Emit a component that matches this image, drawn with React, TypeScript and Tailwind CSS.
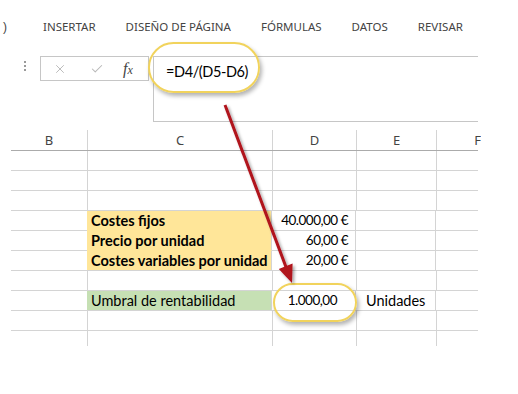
import { X, Check } from "lucide-react";

type Row = {
  c?: string;
  d?: string;
  e?: string;
  fill?: "yellow" | "green";
  bold?: boolean;
  hideBottom?: boolean;
};

const rows: Row[] = [
  {},
  {},
  {},
  { c: "Costes fijos", d: "40.000,00 €", fill: "yellow", bold: true, hideBottom: true },
  { c: "Precio por unidad", d: "60,00 €", fill: "yellow", bold: true, hideBottom: true },
  { c: "Costes variables por unidad", d: "20,00 €", fill: "yellow", bold: true },
  {},
  { c: "Umbral de rentabilidad", d: "1.000,00", e: "Unidades", fill: "green" },
  {},
];

const tabs = ["INSERTAR", "DISEÑO DE PÁGINA", "FÓRMULAS", "DATOS", "REVISAR"];

const cellFont = "font-['Lato',sans-serif] text-[14.5px] text-black";

const App = () => {
  return (
    <div className="relative w-[518px] h-[394px] bg-white overflow-hidden">
      {/* ribbon tabs */}
      <div className="flex items-center h-[52px] font-['Noto_Sans',sans-serif] text-[11.5px] text-[#444] pt-[2px]">
        <span className="ml-[3px] font-['Liberation_Sans',sans-serif] text-[12px]">)</span>
        <div className="flex gap-[30px] ml-[36px]">
          {tabs.map((t) => (
            <span key={t}>{t}</span>
          ))}
        </div>
      </div>

      {/* formula bar */}
      <div className="flex h-[69px] mt-[4px]">
        <div className="w-[40px] flex justify-center pt-[4px]">
          <div className="flex flex-col gap-[2px] pt-[1px] ml-[9px]">
            <span className="w-[2px] h-[2px] bg-[#9a9a9a]" />
            <span className="w-[2px] h-[2px] bg-[#9a9a9a]" />
            <span className="w-[2px] h-[2px] bg-[#9a9a9a]" />
          </div>
        </div>
        <div className="w-[109px] h-[25px] border border-[#c6c6c6] flex items-center">
          <X className="ml-[12px] text-[#b8b8b8]" size={14} strokeWidth={1.6} />
          <Check className="ml-[23px] text-[#b8b8b8]" size={14} strokeWidth={1.8} />
          <span className="ml-[19px] font-['Liberation_Serif',serif] italic text-[16px] text-[#444] leading-none">
            f<span className="text-[12px]">x</span>
          </span>
        </div>
        <div className="ml-[4px] w-[325px] h-[66px] border-t border-l border-b border-[#c6c6c6] pl-[12px] pt-[2px]">
          <span className={`${cellFont} tracking-[-0.4px]`}>=D4/(D5-D6)</span>
        </div>
      </div>

      {/* sheet grid */}
      <div className="ml-[11px] w-[467px] mt-[5px]">
        <div className="flex h-[21px] border-b border-[#ababab] font-['Noto_Sans',sans-serif] text-[13px] text-[#444]">
          <div className="w-[77px] border-r border-[#d4d4d4] text-center leading-[21px]">B</div>
          <div className="w-[185px] border-r border-[#d4d4d4] text-center leading-[21px]">C</div>
          <div className="w-[84px] border-r border-[#d4d4d4] text-center leading-[21px]">D</div>
          <div className="w-[80px] border-r border-[#d4d4d4] text-center leading-[21px]">E</div>
          <div className="flex-1 overflow-hidden text-right leading-[21px] -mr-[3px]">F</div>
        </div>
        {rows.map((r, i) => (
          <div key={i} className={`flex h-[20px] ${cellFont}`}>
            <div className="w-[77px] border-r border-b border-[#d4d4d4]" />
            <div
              className={`w-[185px] border-r border-b border-[#d4d4d4] pl-[3px] leading-[19px] whitespace-nowrap ${
                r.fill === "yellow"
                  ? "bg-[#ffe699] -ml-px pl-[4px]"
                  : r.fill === "green"
                  ? "bg-[#c6e0b4] -ml-px pl-[4px]"
                  : ""
              } ${r.bold ? "font-bold" : ""} ${r.hideBottom ? "border-b-[#ffe699]" : ""}`}
            >
              {r.c}
            </div>
            <div
              className={`w-[84px] border-r border-b border-[#d4d4d4] leading-[19px] text-right text-[13.5px] tracking-[-0.5px] ${
                r.e ? "pr-[18px]" : "pr-[7px]"
              }`}
            >
              {r.d}
            </div>
            <div className="w-[80px] border-r border-b border-[#d4d4d4] leading-[19px] pl-[10px]">
              {r.e}
            </div>
            <div className="flex-1 border-b border-[#d4d4d4]" />
          </div>
        ))}
        <div className="flex h-[15px]">
          <div className="w-[77px] border-r border-[#d4d4d4]" />
          <div className="w-[185px] border-r border-[#d4d4d4]" />
          <div className="w-[84px] border-r border-[#d4d4d4]" />
          <div className="w-[80px] border-r border-[#d4d4d4]" />
        </div>
      </div>

      {/* annotations */}
      <div className="absolute left-[148px] top-[42px] w-[112px] h-[51px] rounded-[26px] border-2 border-[#f1d35c] shadow-[2px_3px_4px_rgba(0,0,0,0.3)]" />
      <div className="absolute left-[273px] top-[283px] w-[84px] h-[39px] rounded-[20px] border-2 border-[#f1d35c] shadow-[2px_3px_4px_rgba(0,0,0,0.3)]" />
      <svg className="absolute left-0 top-0" width={518} height={394}>
        <defs>
          <filter id="sh" x="-20%" y="-20%" width="140%" height="140%">
            <feDropShadow dx="2" dy="2" stdDeviation="1.5" floodColor="#000" floodOpacity="0.35" />
          </filter>
        </defs>
        <g filter="url(#sh)">
          <line x1={225} y1={105} x2={286} y2={267} stroke="#b0121b" strokeWidth={3} />
          <polygon points="292,283 292.6,263.5 278.8,268.9" fill="#b0121b" />
        </g>
      </svg>
    </div>
  );
};

export default App;
